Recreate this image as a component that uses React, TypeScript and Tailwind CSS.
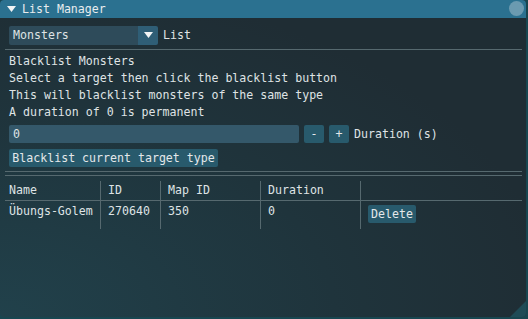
import React from "react";

const rows = [{ name: "Übungs-Golem", id: "270640", map: "350", duration: "0" }];

const Btn = ({ children, className = "" }: { children: React.ReactNode; className?: string }) => (
  <div className={`flex h-[18px] items-center justify-center whitespace-nowrap rounded-[2px] bg-[#285a6c] px-[4px] text-[#e4e8ea] ${className}`}>
    {children}
  </div>
);

export default function App() {
  return (
    <div className="h-[319px] w-[528px] bg-[#184650] font-['DejaVu_Sans_Mono',monospace] text-[11.6px] leading-[17px] text-[#dfe3e5]">
      <div className="flex h-[317px] w-[526px] flex-col overflow-hidden rounded-[4px] bg-[radial-gradient(ellipse_at_0%_100%,#21414b_0%,#1f343c_45%,#1f2d34_75%)]">
        {/* title bar */}
        <div className="relative flex h-[18px] shrink-0 items-center bg-[#2b7190] pl-[7px]">
          <svg width="9" height="7" viewBox="0 0 9 7" className="mr-[6px]">
            <polygon points="0,0 9,0 4.5,6" fill="#f2f4f5" />
          </svg>
          <span className="text-[#e8ecee]">List Manager</span>
          <div className="absolute right-[2px] top-[1px] h-[15px] w-[15px] rounded-full bg-[#6b9ab0]" />
        </div>

        <div className="flex flex-col pl-[9px] pr-[4px]">
          {/* combo */}
          <div className="mt-[8px] flex h-[19px] items-center">
            <div className="flex h-[19px] w-[149px] overflow-hidden rounded-[2px]">
              <div className="flex flex-1 items-center bg-[#2e4b5a] pl-[4px]">Monsters</div>
              <div className="flex w-[20px] items-center justify-center bg-[#2f5e76]">
                <svg width="9" height="7" viewBox="0 0 9 7">
                  <polygon points="0,0 9,0 4.5,6" fill="#f2f4f5" />
                </svg>
              </div>
            </div>
            <span className="ml-[5px]">List</span>
          </div>

          <div className="-ml-[4px] mt-[4px] h-px w-[517px] bg-[#56696f]" />

          <div className="mt-[3px] flex flex-col">
            <div>Blacklist Monsters</div>
            <div>Select a target then click the blacklist button</div>
            <div>This will blacklist monsters of the same type</div>
            <div>A duration of 0 is permanent</div>
          </div>

          {/* duration input */}
          <div className="mt-[4px] flex h-[18px] items-center">
            <div className="flex h-[18px] w-[290px] items-center rounded-[2px] bg-[#34586a] pl-[4px]">0</div>
            <Btn className="ml-[5px] w-[20px]">-</Btn>
            <Btn className="ml-[5px] w-[20px]">+</Btn>
            <span className="ml-[5px]">Duration (s)</span>
          </div>

          <div className="mt-[6px] flex">
            <Btn className="w-[209px]">Blacklist current target type</Btn>
          </div>

          <div className="-ml-[4px] mt-[4px] h-px w-[517px] bg-[#56696f]" />
          <div className="-ml-[4px] mt-[3px] h-px w-[517px] bg-[#56696f]" />

          {/* table */}
          <div className="-ml-[4px] mt-[5px] w-[517px]">
            <div className="flex h-[19px]">
              <div className="w-[96px] border-r border-[#56696f] pl-[4px] pt-[1px]">Name</div>
              <div className="w-[60px] border-r border-[#56696f] pl-[7px] pt-[1px]">ID</div>
              <div className="w-[100px] border-r border-[#56696f] pl-[7px] pt-[1px]">Map ID</div>
              <div className="w-[100px] border-r border-[#56696f] pl-[7px] pt-[1px]">Duration</div>
              <div className="flex-1" />
            </div>
            <div className="h-px w-full bg-[#56696f]" />
            {rows.map((r) => (
              <div key={r.id} className="flex h-[28px]">
                <div className="w-[96px] border-r border-[#56696f] pl-[4px] pt-[2px]">{r.name}</div>
                <div className="w-[60px] border-r border-[#56696f] pl-[7px] pt-[2px]">{r.id}</div>
                <div className="w-[100px] border-r border-[#56696f] pl-[7px] pt-[2px]">{r.map}</div>
                <div className="w-[100px] border-r border-[#56696f] pl-[7px] pt-[2px]">{r.duration}</div>
                <div className="flex-1 pl-[7px] pt-[4px]">
                  <Btn className="w-[48px]">Delete</Btn>
                </div>
              </div>
            ))}
          </div>
        </div>

        <div className="relative flex-1">
          <div className="absolute bottom-0 right-0 h-0 w-0 border-b-[16px] border-l-[16px] border-b-[#1f4b56] border-l-transparent" />
        </div>
      </div>
    </div>
  );
}
